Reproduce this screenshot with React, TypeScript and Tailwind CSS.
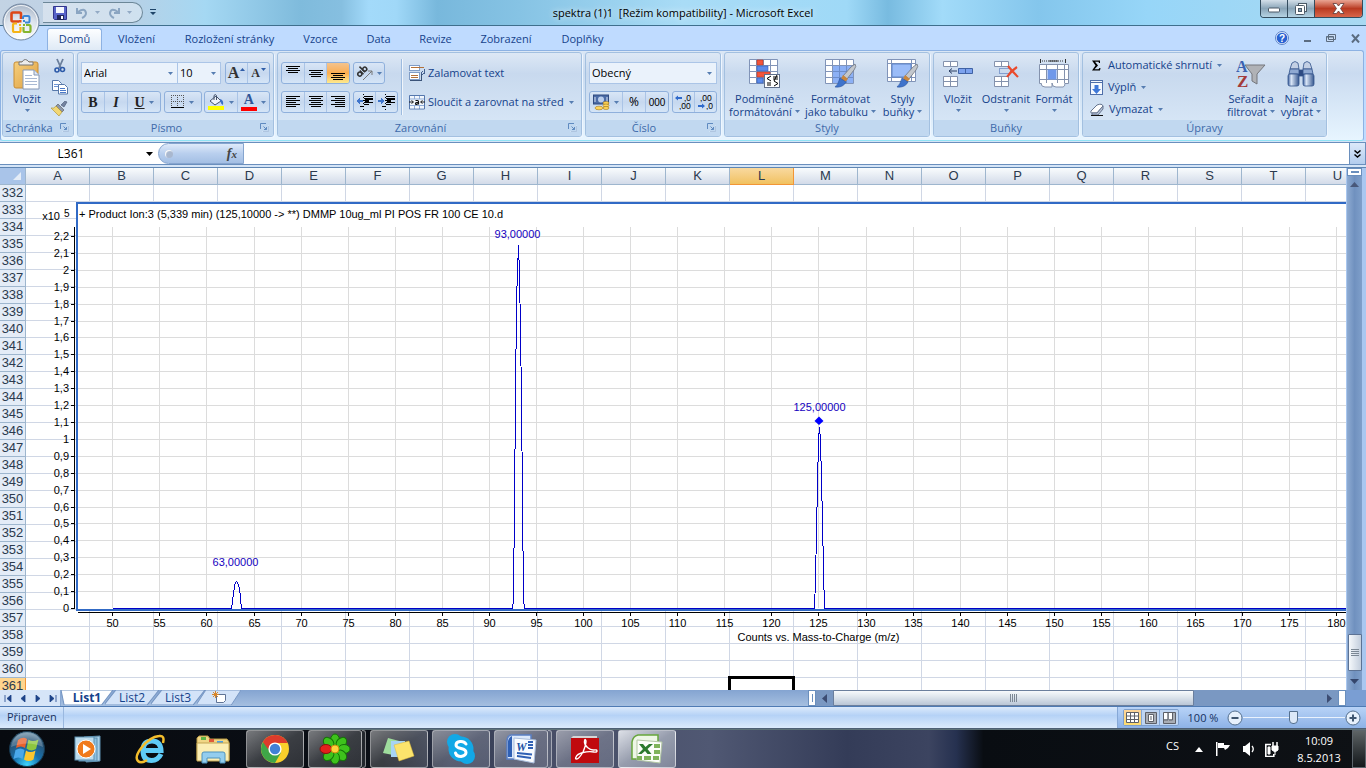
import React from "react";

type Kids = { children?: React.ReactNode; className?: string };

const Caret = ({ className = "text-[#567db1]" }: { className?: string }) => (
  <svg width="5" height="3" viewBox="0 0 5 3" className={"shrink-0 " + className} aria-hidden="true">
    <path d="M0 0h5L2.500 3z" fill="currentColor" />
  </svg>
);

const Launcher = ({ label }: { label: string }) => (
  <button aria-label={label} className="absolute right-1 top-[3px]">
    <svg width="9" height="9" viewBox="0 0 9 9" fill="none" stroke="#5f8ac0">
      <path d="M0.5 6V.5H6" />
      <path d="M8.500 3v5.500H3M3.500 3.500l3 3M6.500 4v2.500H4" />
      <path d="M2.500 8.500h6V2.500" stroke="#fff" opacity=".5" />
    </svg>
  </button>
);

function Group({ label, launcher, className = "", children }: Kids & { label: string; launcher?: boolean }) {
  return (
    <section
      aria-label={label}
      className={
        "flex h-[85px] shrink-0 flex-col overflow-hidden rounded-[3px] border border-[#a3c0e0] bg-linear-to-b from-[#dde8f5] via-[#c8d9ee] via-25% to-[#dae9f8] shadow-[1px_1px_0_#eef6ff] " +
        className
      }
    >
      <div className="min-h-0 flex-1">{children}</div>
      <div className={"relative h-4 bg-[#c1d8f0] text-center text-[11px] leading-4 text-[#3e6aaa] " + (launcher ? "pr-[18px]" : "")}>
        {label}
        {launcher && <Launcher label={"Možnosti: " + label} />}
      </div>
    </section>
  );
}

const Box = ({ children, className = "" }: Kids) => (
  <div
    className={
      "flex h-[22px] items-stretch divide-x divide-[#aac4e6] overflow-hidden rounded-[3px] border border-[#8fb0dc] bg-linear-to-b from-[#d9e6f6] via-[#c6d8ef] to-[#d5e5f7] " +
      className
    }
  >
    {children}
  </div>
);

const Tool = ({ label, children, className = "flex-1" }: Kids & { label: string }) => (
  <button aria-label={label} className={"flex items-center justify-center gap-1 " + className}>
    {children}
  </button>
);

function Combo({ label, value, className }: { label: string; value: string; className: string }) {
  return (
    <div className={"relative flex h-[22px] items-center border border-[#abc5e7] bg-[#eaf2fb] " + className}>
      <select aria-label={label} className="h-full w-full appearance-none bg-transparent pl-0.5 text-[11px] text-black outline-none" defaultValue={value}>
        <option>{value}</option>
      </select>
      <span className="pointer-events-none absolute right-1">
        <Caret />
      </span>
    </div>
  );
}

function Big({ icon, lines, caretBelow, className }: { icon: React.ReactNode; lines: string[]; caretBelow?: boolean; className: string }) {
  return (
    <button className={"flex shrink-0 flex-col items-center pt-[5px] text-[11px] leading-[13px] whitespace-nowrap text-[#15428b] " + className}>
      <span className="mb-0.5 flex h-8 items-center">{icon}</span>
      {lines.map((l, i) => (
        <span key={l} className="flex items-center gap-[3px]">
          {l}
          {!caretBelow && i === lines.length - 1 && <Caret />}
        </span>
      ))}
      {caretBelow && (
        <span className="pt-1">
          <Caret />
        </span>
      )}
    </button>
  );
}

/* ---------- ribbon icons ---------- */

const Bars = ({ rows }: { rows: number[][] }) => (
  <svg width="16" height="16" viewBox="0 0 16 16" stroke="#000" shapeRendering="crispEdges">
    {rows.map(([y, a, b]) => (
      <path key={y} d={`M${a} ${y + 0.5}H${b}`} />
    ))}
  </svg>
);

const top3 = [[1, 1, 15], [3, 3, 13], [5, 1, 15], [7, 3, 13]];
const mid3 = [[5, 1, 15], [7, 3, 13], [9, 1, 15], [11, 3, 13]];
const bot3 = [[8, 1, 15], [10, 3, 13], [12, 1, 15], [14, 3, 13]];
const left6 = [[2, 1, 15], [4, 1, 11], [6, 1, 15], [8, 1, 11], [10, 1, 15], [12, 1, 11]];
const center6 = [[2, 1, 15], [4, 3, 13], [6, 1, 15], [8, 3, 13], [10, 1, 15], [12, 3, 13]];
const right6 = [[2, 1, 15], [4, 5, 15], [6, 1, 15], [8, 5, 15], [10, 1, 15], [12, 5, 15]];

const Indent = ({ out }: { out?: boolean }) => (
  <svg width="18" height="16" viewBox="0 0 18 16" shapeRendering="crispEdges">
    <path d="M8 2.500h9M8 4.500h9M8 6.500h5M8 8.500h9M8 10.500h5M4 12.500h4" stroke="#000" />
    <path d="M9 5h8M9 7h4" stroke="#000" strokeWidth="2" />
    <path d="M7.500 0v16" stroke="#000" strokeDasharray="1 2" />
    <path d={out ? "M0 7l4-3v2h3v2H4v2z" : "M7 7L3 4v2H0v2h3v2z"} fill="#3f75cc" />
  </svg>
);

const PasteIcon = () => (
  <svg width="28" height="31" viewBox="0 0 28 31">
    <defs>
      <linearGradient id="board" x1="0" y1="0" x2="1" y2="1">
        <stop offset="0" stopColor="#f6cf7e" />
        <stop offset="1" stopColor="#dd9f3f" />
      </linearGradient>
    </defs>
    <rect x="1" y="3" width="24" height="26" rx="2" fill="url(#board)" stroke="#c88d35" />
    <path d="M6 6V3h3q3-5 7 0h4v3z" fill="#ececec" stroke="#777" />
    <path d="M10 11h11l5 5v14H10z" fill="#fff" stroke="#8698b5" />
    <path d="M21 11v5h5" fill="#dfe7f3" stroke="#8698b5" />
    <path d="M12 16.500h7M12 19.500h12M12 22.500h12M12 25.500h12" stroke="#a9b9d3" />
  </svg>
);
const CutIcon = () => (
  <svg width="14" height="16" viewBox="0 0 14 16" fill="none">
    <path d="M4 1l4 9M10 1L6 10" stroke="#6b7f9c" strokeWidth="1.800" />
    <circle cx="4" cy="12" r="2" stroke="#2d5aa8" strokeWidth="1.600" />
    <circle cx="9.500" cy="11.500" r="2" stroke="#2d5aa8" strokeWidth="1.600" />
  </svg>
);
const CopyIcon = () => (
  <svg width="16" height="15" viewBox="0 0 16 15" stroke="#5778aa" fill="#fff">
    <path d="M.5.5h6l3 3v7h-9z" />
    <path d="M2 4.500h4M2 6.500h5" stroke="#6f96d6" />
    <path d="M6.500 4.500h6l3 3v6.500h-9z" />
    <path d="M8 8.500h5M8 10.500h6M8 12.500h6" stroke="#4a79c9" />
  </svg>
);
const BrushIcon = () => (
  <svg width="17" height="15" viewBox="0 0 17 15">
    <path d="M10 4l4-4 2 1-3 5z" fill="#7483a0" stroke="#465572" strokeWidth=".6" />
    <path d="M7 3l6 6-2 2-6-6z" fill="#8b96a9" stroke="#555" strokeWidth=".6" />
    <path d="M5 5l6 6-3 4L0 7q3 1 5-2z" fill="#f2d774" stroke="#a88d2b" strokeWidth=".6" />
  </svg>
);
const BordersIcon = () => (
  <svg width="14" height="14" viewBox="0 0 14 14" shapeRendering="crispEdges">
    <path d="M0 .5h13M0 6.500h13M.5 0v12M6.500 0v12M12.500 0v12" stroke="#555" strokeDasharray="1 1" />
    <path d="M0 12.500h13" stroke="#000" strokeWidth="1" />
  </svg>
);
const FillIcon = () => (
  <svg width="17" height="16" viewBox="0 0 17 16">
    <path d="M2 7l6-5 5 5-6 4z" fill="#eef3fb" stroke="#44526b" />
    <path d="M6 6V1.500q1.500-2 2.500 0V6" fill="none" stroke="#44526b" />
    <path d="M12 5q4 1 3 6-2-1-3-4z" fill="#3a70c8" />
    <rect y="12" width="16" height="4" fill="#ff0" />
  </svg>
);
const OrientIcon = () => (
  <svg width="16" height="16" viewBox="0 0 16 16" fill="none">
    <g transform="rotate(-45 6 8)" stroke="#333" strokeWidth="1.500">
      <circle cx="3" cy="6.500" r="2" />
      <path d="M5.500 4v5.200M8 1v8" />
      <circle cx="10" cy="6.500" r="2" />
    </g>
    <path d="M6 15l9-9M15 10V6h-4" stroke="#777" />
  </svg>
);
const WrapIcon = () => (
  <svg width="16" height="16" viewBox="0 0 16 16" shapeRendering="crispEdges">
    <path d="M.5.5h10v5H.5zM.5 7.500h10v7H.5z" fill="#fff" stroke="#7f9cc6" />
    <path d="M2 2.500h13M2 10.500h7M2 12.500h7" stroke="#b3713a" />
    <path d="M1 15.500h11V8" stroke="#3b5379" fill="none" />
    <path d="M15.500 4v4h-2M14 6l-2 2 2 2" stroke="#45618f" fill="none" />
  </svg>
);
const MergeIcon = () => (
  <svg width="16" height="15" viewBox="0 0 16 15">
    <path d="M.5.5h15v13.500H.5z" fill="#8fabd6" stroke="#5577ad" />
    <path d="M1 1h4v2.500H1zM6 1h4v2.500H6zM11 1h4v2.500h-4zM1 4.500h14v5.500H1zM1 11h4v2.500H1zM6 11h4v2.500H6zM11 11h4v2.500h-4z" fill="#f2f7fd" />
    <path d="M0 7h4M2.500 5.500L4.500 7l-2 1.500M16 7h-4M13.500 5.500L11.500 7l2 1.500" stroke="#222" fill="none" />
    <path d="M6.500 5.500h2q1 0 1 1v3M9.500 7.500h-2q-1 0-1 1t1 .8l2-.8" stroke="#111" strokeWidth="1.200" fill="none" />
  </svg>
);
const MoneyIcon = () => (
  <svg width="17" height="17" viewBox="0 0 17 17">
    <rect x=".5" y="1" width="15" height="9" fill="#4b6ba6" stroke="#2f4a80" />
    <circle cx="8" cy="5.500" r="3" fill="#b9cdec" />
    <path d="M2 3v5M14 3v5" stroke="#dbe6f7" />
    <ellipse cx="13" cy="9" rx="3" ry="1.500" fill="#ffd65c" stroke="#a6791a" strokeWidth=".6" />
    <ellipse cx="13" cy="11.500" rx="3" ry="1.500" fill="#ffd65c" stroke="#a6791a" strokeWidth=".6" />
    <ellipse cx="13" cy="14" rx="3" ry="1.500" fill="#ffd65c" stroke="#a6791a" strokeWidth=".6" />
    <ellipse cx="6" cy="14" rx="4" ry="1.800" fill="#ffd65c" stroke="#a6791a" strokeWidth=".6" />
  </svg>
);
const DecimalIcon = ({ add }: { add?: boolean }) => (
  <svg width="18" height="16" viewBox="0 0 18 16" fontFamily="Liberation Sans, sans-serif" fontSize="8.500" fill="#000" stroke="none">
    <text x={add ? 9 : 3} y="7">{add ? ",0" : ",00"}</text>
    <text x={add ? 4 : 9} y="15">{add ? ",00" : ",0"}</text>
    <path d={add ? "M0 4l3-2.500V3h4v2H3v1.500z" : "M8 12L5 9.500V11H1v2h4v1.500z"} fill="#2f6acb" />
  </svg>
);
const Cells = ({ fill = "#fff" }: { fill?: string }) => (
  <path d="M.5.5h28v24H.5zM.5 6.500h28M.5 12.500h28M.5 18.500h28M7.500.5v24M14.500.5v24M21.500.5v24" fill={fill} stroke="#8194b8" />
);
const Paintbrush = () => (
  <>
    <path d="M30 5q2 2-1 6l-7 9-4-3 8-9z" fill="#c3c7cc" stroke="#646a73" strokeWidth=".7" />
    <path d="M18 16l5 4-3 3-4-3z" fill="#c9863c" />
    <path d="M15 19l6 4q-3 6-11 5 3-2 5-9z" fill="#3f73cb" stroke="#27519c" strokeWidth=".6" />
  </>
);
const CondIcon = () => (
  <svg width="31" height="30" viewBox="0 0 31 30">
    <Cells />
    <path d="M8 1h6v5H8zM8 13h13v5H8z" fill="#f2553b" stroke="#c53722" strokeWidth=".6" />
    <path d="M8 7h11v5H8zM8 19h6v5H8z" fill="#5c8bea" stroke="#2f5cba" strokeWidth=".6" />
    <rect x="15.500" y="15.500" width="15" height="13" fill="#fff" stroke="#5e6e8b" />
    <path d="M22 17l-4 2.500 4 2.500M24 18h5M24 20h5M28 16l-3 6M18 24h4M18 26h4M25 22l4 2.500-4 2.500" fill="none" stroke="#000" />
  </svg>
);
const TableStyleIcon = () => (
  <svg width="32" height="30" viewBox="0 0 32 30">
    <Cells />
    <path d="M8 7h20v17H8z" fill="#8cb0f5" />
    <path d="M8 12.500h20M8 18.500h20M14.500 7v17M21.500 7v17" stroke="#6c8dcb" />
    <Paintbrush />
  </svg>
);
const CellStyleIcon = () => (
  <svg width="32" height="30" viewBox="0 0 32 30">
    <path d="M.5.5h28v22H.5zM.5 4.500h28M.5 18.500h28M4.500.5v22M24.500.5v22" fill="#fff" stroke="#8194b8" />
    <rect x="5" y="5" width="19" height="13" fill="#9abcf8" stroke="#5f84c8" />
    <Paintbrush />
  </svg>
);
const InsertIcon = () => (
  <svg width="31" height="28" viewBox="0 0 31 28">
    <path d="M.5 1.500h14v5H.5zM7.500 1.500v5M.5 16.500h14v10H.5zM7.500 16.500v10M.5 21.500h14" fill="#fff" stroke="#8492ad" />
    <path d="M15.500 8.500h14v5h-14zM22.500 8.500v5" fill="#7ca2ee" stroke="#3f62a5" />
    <path d="M6 11h8M9 8.500L6 11l3 2.500" stroke="#2b3f63" fill="none" />
  </svg>
);
const DeleteIcon = () => (
  <svg width="25" height="28" viewBox="0 0 25 28">
    <path d="M.5 1.500h14v5H.5zM7.500 1.500v5M.5 16.500h14v10H.5zM7.500 16.500v10M.5 21.500h14" fill="#fff" stroke="#8492ad" />
    <path d="M5.500 8.500h11v5h-11z" fill="none" stroke="#3d64b0" strokeDasharray="1 1" />
    <path d="M14 6q4 5 10 11M23 7q-6 4-10 10" stroke="#ea4a2c" strokeWidth="2.200" fill="none" />
  </svg>
);
const FormatIcon = () => (
  <svg width="31" height="30" viewBox="0 0 31 30">
    <path d="M1.500 0v4M26.500 0v4" stroke="#333" />
    <path d="M3 2h22" stroke="#333" strokeDasharray="1 1" />
    <path d="M10 2h9" stroke="#333" />
    <path d="M.5 5.500h29v19H.5zM.5 10.500h29M.5 20.500h29M7.500 5.500v19M18.500 5.500v19M25.500 5.500v19" fill="#fff" stroke="#8492ad" />
    <rect x="8.500" y="10.500" width="9" height="10" fill="#6f98ea" />
    <path d="M2 24q0 4 4 4h7v-4M13 24q0 4 4 4h7q2 0 2-4" fill="#fff" stroke="#8492ad" />
  </svg>
);
const SortIcon = () => (
  <svg width="30" height="30" viewBox="0 0 30 30" fontFamily="Liberation Serif, serif" fontWeight="bold">
    <path d="M9 6h20l-8 9v10l-5-3v-7z" fill="#b0b2b6" stroke="#74777d" />
    <text x="0" y="13" fontSize="16" fill="#3a62b0">A</text>
    <text x="1" y="28" fontSize="17" fill="#a33b3b">Z</text>
  </svg>
);
const FindIcon = () => (
  <svg width="28" height="26" viewBox="0 0 28 26" stroke="#34548c" strokeWidth=".8">
    <defs>
      <linearGradient id="tube" x1="0" x2="1">
        <stop offset="0" stopColor="#3b5e9c" />
        <stop offset=".3" stopColor="#dbe7f8" />
        <stop offset="1" stopColor="#36578f" />
      </linearGradient>
    </defs>
    <path d="M5 2q3-3 6 0l1 6H3zM17 2q3-3 6 0l2 6h-9z" fill="#c3d0e4" />
    <path d="M11 9h6v6h-6z" fill="#2d4a82" />
    <path d="M3 8h9v5H2zM16 8h9l1 5H16z" fill="#8fa9d2" />
    <rect x="1" y="13" width="11" height="12" rx="2" fill="url(#tube)" />
    <rect x="16" y="13" width="11" height="12" rx="2" fill="url(#tube)" />
  </svg>
);
const DownFillIcon = () => (
  <svg width="13" height="15" viewBox="0 0 13 15">
    <rect x=".5" y=".5" width="12" height="14" fill="#f5f9ff" stroke="#4f6fa9" />
    <path d="M1 2.500h11" stroke="#4f6fa9" />
    <path d="M4.500 5h4v4H11l-4.500 5L2 9h2.500z" fill="#3f78d8" />
  </svg>
);
const EraserIcon = () => (
  <svg width="14" height="13" viewBox="0 0 14 13">
    <path d="M1 8l6-6q5-2 6 1L7 10H2q-2 0-1-2z" fill="#fff" stroke="#66758f" />
    <path d="M7 10L13 3v3l-5 6H2v-2z" fill="#b8c4d8" stroke="#66758f" />
    <path d="M1 12.500h12" stroke="#111" />
  </svg>
);

/* ---------- title bar and tabs ---------- */

function TitleBar() {
  return (
    <header className="relative flex h-[26px] shrink-0 items-center border-b border-[#3f6f8d] bg-[linear-gradient(90deg,#c3d3e4_0%,#b9d0e5_9%,#a5d8f3_15%,#7fbbdc_22%,#86bfe0_25%,#a3dafa_27%,#a0d8f8_29%,#78b8dc_32%,#86c3e4_38%,#a9dcf6_50%,#9fd9f7_62%,#78bbe0_65%,#a2dbf9_69%,#84c6ec_76%,#97d6f8_84%,#a9d9f2_100%)] pl-[43px]">
      <div className="flex h-[21px] items-center rounded-r-full border border-l-0 border-[#6c8798] bg-white/35 pr-2.5 pl-2.5">
        <button aria-label="Uložit" className="mr-[9px]">
          <svg width="14" height="14" viewBox="0 0 14 14">
            <path d="M.5.5h13v13H1.500l-1-1z" fill="#5763c9" stroke="#32358d" />
            <path d="M3 1h8v6H3z" fill="#f4f7ff" />
            <path d="M4 9h7v5H4z" fill="#20275e" />
            <path d="M8 10h2v3H8z" fill="#fff" />
          </svg>
        </button>
        <button aria-label="Zpět" className="flex items-center gap-[7px]">
          <svg width="12" height="12" viewBox="0 0 12 12" fill="none" stroke="#8ba5c2" strokeWidth="2">
            <path d="M1 1v5h5M2 5q7-5 8 1 0 3-4 5" />
          </svg>
          <Caret className="text-[#93aac5]" />
        </button>
        <button aria-label="Znovu" className="ml-2 flex items-center gap-[7px]">
          <svg width="12" height="12" viewBox="0 0 12 12" fill="none" stroke="#8ba5c2" strokeWidth="2">
            <path d="M11 1v5H6M10 5Q3 0 2 6q0 3 4 5" />
          </svg>
          <Caret className="text-[#93aac5]" />
        </button>
      </div>
      <button aria-label="Přizpůsobit panel nástrojů Rychlý přístup" className="ml-[7px]">
        <svg width="6" height="7" viewBox="0 0 6 7" fill="#1f4569">
          <path d="M0 0h6v1H0zM0 3h6L3 6z" />
        </svg>
      </button>
      <h1 className="absolute inset-x-0 top-1 text-center text-[11px] leading-[18px] whitespace-pre text-black [text-shadow:0_0_6px_#fff]">
        {"spektra (1)1  [Režim kompatibility] - Microsoft Excel"}
      </h1>
      <div className="relative mr-[3px] ml-auto flex h-[18px] self-start overflow-hidden rounded-b-[4px] border border-t-0 border-[#334c5e]">
        <button aria-label="Minimalizovat" className="flex w-[27px] items-end justify-center border-r border-[#334c5e] bg-linear-to-b from-[#d3dfe9] via-[#8aa5b8] via-50% to-[#b5d3e4] pb-1">
          <svg width="13" height="6" viewBox="0 0 13 6"><rect x=".5" y="1" width="11" height="4" rx="1" fill="#fff" stroke="#4c5b68" /></svg>
        </button>
        <button aria-label="Obnovit" className="flex w-[27px] items-center justify-center border-r border-[#334c5e] bg-linear-to-b from-[#d3dfe9] via-[#8aa5b8] via-50% to-[#b5d3e4]">
          <svg width="13" height="12" viewBox="0 0 13 12" fill="#fff" stroke="#4c5b68">
            <rect x="3.500" y=".5" width="8" height="8" />
            <rect x=".5" y="2.500" width="9" height="9" rx="1" />
            <rect x="3.500" y="5.500" width="3" height="3" fill="#8aa5b8" />
          </svg>
        </button>
        <button aria-label="Zavřít" className="flex w-[47px] items-center justify-center bg-linear-to-b from-[#e9a493] via-[#b93a21] via-50% to-[#d8654a]">
          <svg width="13" height="11" viewBox="0 0 13 11"><path d="M1 .5h3.500l2 2.500 2-2.500H12L8.500 5.500 12 10.500H8.500l-2-2.500-2 2.500H1l3.500-5z" fill="#fff" stroke="#5d3a3a" strokeWidth=".8" /></svg>
        </button>
      </div>
      <button aria-label="Tlačítko Office" className="absolute top-[3px] left-[2px] z-10">
        <svg width="38" height="38" viewBox="0 0 38 38">
          <defs>
            <radialGradient id="orb" cx=".5" cy=".9" r=".9">
              <stop offset="0" stopColor="#fff" />
              <stop offset=".6" stopColor="#dde4ed" />
              <stop offset="1" stopColor="#a4b2c4" />
            </radialGradient>
          </defs>
          <circle cx="19" cy="19" r="18" fill="url(#orb)" stroke="#71859f" />
          <circle cx="19" cy="19" r="16.500" fill="none" stroke="#fff" opacity=".8" />
          <g fill="none" strokeWidth="2.600">
            <path d="M17 18.500h-6q-1.500 0-1.500-1.500v-6q0-1.500 1.500-1.500h6.500q1.500 0 1.500 1.500v5" stroke="#dd4717" />
            <path d="M21 16v-1.500q0-1.500 1.500-1.500h3.500q1.500 0 1.500 1.500V18q0 1.500-1.500 1.500h-3" stroke="#3a86d8" strokeWidth="2" />
            <path d="M15 20.500h-2.500q-1.500 0-1.500 1.500v5.500q0 1.500 1.500 1.500h4.500q1.500 0 1.500-1.500V24" stroke="#f5b417" strokeWidth="2.200" />
            <path d="M21.500 24v3.500q0 1.500 1.500 1.500h4q1.500 0 1.500-1.500v-4q0-1.500-1.500-1.500h-3" stroke="#86b52e" strokeWidth="2.200" />
          </g>
          <path d="M17 17h2.500v2.500H17z" fill="#e2511c" /><path d="M21 17h2v2h-2z" fill="#3a86d8" />
          <path d="M17 21h2v2h-2z" fill="#f5b417" /><path d="M21 21h2v2h-2z" fill="#86b52e" />
        </svg>
      </button>
    </header>
  );
}

const tabs: [string, string][] = [
  ["Vložení", "w-[67px]"],
  ["Rozložení stránky", "w-[119px]"],
  ["Vzorce", "w-[63px]"],
  ["Data", "w-[53px]"],
  ["Revize", "w-[61px]"],
  ["Zobrazení", "w-20"],
  ["Doplňky", "w-[73px]"],
];

function TabRow() {
  return (
    <nav className="flex h-6 shrink-0 bg-[#bfdbff] pl-[47px] text-[11px] whitespace-nowrap text-[#15428b]">
      <button className="mt-0.5 mr-px w-[55px] rounded-t-[3px] border border-b-0 border-[#8db2e3] bg-linear-to-b from-[#fdfeff] to-[#dfeaf6]">Domů</button>
      {tabs.map(([t, w]) => (
        <button key={t} className={"pt-0.5 text-center " + w}>{t}</button>
      ))}
      <div className="ml-auto flex items-center gap-[15px] pr-[6px]">
        <button aria-label="Nápověda">
          <svg width="14" height="14" viewBox="0 0 14 14">
            <circle cx="7" cy="7" r="6.500" fill="#eaf2fd" stroke="#5c83c9" />
            <circle cx="7" cy="7" r="5.300" fill="#2a62d2" />
            <text x="7" y="10.500" fontSize="10" fontWeight="bold" fill="#fff" textAnchor="middle" fontFamily="Liberation Sans, sans-serif">?</text>
          </svg>
        </button>
        <button aria-label="Minimalizovat sešit" className="pt-1.5"><svg width="7" height="2"><path d="M0 0h7v2H0z" fill="#5b6c80" /></svg></button>
        <button aria-label="Obnovit sešit">
          <svg width="10" height="8" viewBox="0 0 10 8" fill="#c9dcf5" stroke="#5b6c80"><path d="M2.500.5h7v5h-7zM.5 2.500h7v5h-7z" /><path d="M.5 3h7" /></svg>
        </button>
        <button aria-label="Zavřít sešit">
          <svg width="9" height="9" viewBox="0 0 9 9"><path d="M1 .5l7 8M8 .5l-7 8" stroke="#5b6c80" strokeWidth="2" /></svg>
        </button>
      </div>
    </nav>
  );
}

/* ---------- ribbon ---------- */

function Ribbon() {
  return (
    <div className="shrink-0 bg-[#bfdbff] pr-0.5">
      <div className="flex h-[91px] gap-[3px] overflow-hidden rounded-[3px] border border-[#8db2e3] border-b-[#8fe3f5] bg-linear-to-b from-[#dbe7f5] via-[#cadbf0] via-25% to-[#e7f5ff] pt-px pl-px">
        <Group label="Schránka" launcher className="w-[72px]">
          <div className="flex">
            <Big icon={<PasteIcon />} lines={["Vložit"]} caretBelow className="w-[48px]" />
            <div className="flex flex-col items-center gap-1.5 pt-[5px]">
              <button aria-label="Vyjmout"><CutIcon /></button>
              <button aria-label="Kopírovat"><CopyIcon /></button>
              <button aria-label="Kopírovat formát"><BrushIcon /></button>
            </div>
          </div>
        </Group>
        <Group label="Písmo" launcher className="w-[197px]">
          <div className="flex flex-col gap-[7px] px-[3px] pt-[9px]">
            <div className="flex">
              <Combo label="Písmo" value="Arial" className="w-[97px]" />
              <Combo label="Velikost písma" value="10" className="w-[43px] border-l-0" />
              <Box className="ml-1 w-[45px] font-[Liberation_Serif,serif] font-bold text-[#333]">
                <Tool label="Zvětšit písmo" className="min-w-0 flex-1 gap-px">
                  <span className="text-[16px] leading-5">A</span>
                  <svg width="5" height="3" className="mb-2 shrink-0"><path d="M0 3h5L2.500 0z" fill="#2f5da8" /></svg>
                </Tool>
                <Tool label="Zmenšit písmo" className="min-w-0 flex-1 gap-px">
                  <span className="text-[12px] leading-5">A</span>
                  <svg width="5" height="3" className="mb-2 shrink-0"><path d="M0 0h5L2.500 3z" fill="#2f5da8" /></svg>
                </Tool>
              </Box>
            </div>
            <div className="flex justify-between font-[Liberation_Serif,serif] text-[14px] text-[#222]">
              <Box className="w-20">
                <Tool label="Tučné"><b>B</b></Tool>
                <Tool label="Kurzíva"><b><i>I</i></b></Tool>
                <Tool label="Podtržené" className="w-8"><b className="underline">U</b><Caret /></Tool>
              </Box>
              <Box className="w-[38px]">
                <Tool label="Ohraničení"><BordersIcon /><Caret /></Tool>
              </Box>
              <Box className="w-[66px]">
                <Tool label="Barva výplně"><FillIcon /><Caret /></Tool>
                <Tool label="Barva písma">
                  <span className="flex w-4 flex-col items-center">
                    <span className="text-[14px] leading-[14px] font-bold text-[#2f5597]">A</span>
                    <span className="h-1 w-4 bg-[#f00]" />
                  </span>
                  <Caret />
                </Tool>
              </Box>
            </div>
          </div>
        </Group>
        <Group label="Zarovnání" launcher className="w-[305px]">
          <div className="flex">
            <div className="flex flex-col gap-[7px] pt-[9px] pl-[3px]">
              <div className="flex gap-[3px]">
                <Box className="w-[69px]">
                  <Tool label="Zarovnat nahoru"><Bars rows={top3} /></Tool>
                  <Tool label="Zarovnat na střed svisle"><Bars rows={mid3} /></Tool>
                  <Tool label="Zarovnat dolů" className="flex-1 bg-linear-to-b from-[#f3c38d] via-[#fbad4e] to-[#fdea8e]"><Bars rows={bot3} /></Tool>
                </Box>
                <Box className="w-8"><Tool label="Orientace" className="flex-1 gap-0.5"><OrientIcon /><Caret /></Tool></Box>
              </div>
              <div className="flex gap-[3px]">
                <Box className="w-[69px]">
                  <Tool label="Zarovnat vlevo"><Bars rows={left6} /></Tool>
                  <Tool label="Zarovnat na střed"><Bars rows={center6} /></Tool>
                  <Tool label="Zarovnat vpravo"><Bars rows={right6} /></Tool>
                </Box>
                <Box className="w-[45px]">
                  <Tool label="Zmenšit odsazení"><Indent out /></Tool>
                  <Tool label="Zvětšit odsazení"><Indent /></Tool>
                </Box>
              </div>
            </div>
            <div className="mt-1.5 ml-[3px] h-14 w-0.5 border-l border-[#9dbbdf] bg-white/70" />
            <div className="flex flex-col gap-[7px] pt-[9px] pl-1.5 text-[11px] whitespace-nowrap text-[#15428b]">
              <button className="flex h-[22px] items-center gap-[3px]"><WrapIcon />Zalamovat text</button>
              <button className="flex h-[22px] items-center gap-[3px]"><MergeIcon />Sloučit a zarovnat na střed<span className="pl-0.5"><Caret /></span></button>
            </div>
          </div>
        </Group>
        <Group label="Číslo" launcher className="w-[136px]">
          <div className="flex flex-col gap-[7px] px-[3px] pt-[9px]">
            <Combo label="Formát čísla" value="Obecný" className="w-full" />
            <div className="flex justify-between text-[12px] text-black">
              <Box className="w-20">
                <Tool label="Účetní formát čísla" className="w-[33px]"><MoneyIcon /><Caret /></Tool>
                <Tool label="Styl procent">%</Tool>
                <Tool label="Styl čárky"><span className="font-[Liberation_Sans,sans-serif] text-[10px]">000</span></Tool>
              </Box>
              <Box className="w-[45px]">
                <Tool label="Přidat desetinné místo"><DecimalIcon add /></Tool>
                <Tool label="Odebrat desetinné místo"><DecimalIcon /></Tool>
              </Box>
            </div>
          </div>
        </Group>
        <Group label="Styly" className="w-[206px]">
          <div className="flex pl-px">
            <Big icon={<CondIcon />} lines={["Podmíněné", "formátování"]} className="w-[77px]" />
            <Big icon={<TableStyleIcon />} lines={["Formátovat", "jako tabulku"]} className="w-[75px]" />
            <Big icon={<CellStyleIcon />} lines={["Styly", "buňky"]} className="w-[49px]" />
          </div>
        </Group>
        <Group label="Buňky" className="w-[146px]">
          <div className="flex">
            <Big icon={<InsertIcon />} lines={["Vložit"]} caretBelow className="w-12" />
            <Big icon={<DeleteIcon />} lines={["Odstranit"]} caretBelow className="w-12" />
            <Big icon={<FormatIcon />} lines={["Formát"]} caretBelow className="w-12" />
          </div>
        </Group>
        <Group label="Úpravy" className="w-[245px]">
          <div className="flex">
            <div className="flex w-[142px] flex-col pt-px pl-[7px] text-[11px] whitespace-nowrap text-[#15428b]">
              <button className="flex h-[22px] items-center gap-[5px]">
                <svg width="13" height="11" viewBox="0 0 13 11"><path d="M2 .5h8V3H9L8.500 1.800H5L8 5.500 4.500 9.200h4L9.500 8h1l-.5 2.500H2L5.500 5.500z" fill="#000" /></svg>
                Automatické shrnutí
                <Caret />
              </button>
              <button className="flex h-[22px] items-center gap-[5px]"><DownFillIcon />Výplň<Caret /></button>
              <button className="flex h-[22px] items-center gap-[5px]"><EraserIcon />Vymazat<Caret /></button>
            </div>
            <Big icon={<SortIcon />} lines={["Seřadit a", "filtrovat"]} className="w-[52px]" />
            <Big icon={<FindIcon />} lines={["Najít a", "vybrat"]} className="w-[48px]" />
          </div>
        </Group>
      </div>
    </div>
  );
}

function FormulaBar() {
  return (
    <div className="flex h-[27px] shrink-0 border-b border-[#5f86b3] bg-[#d5e5f7] pt-px">
      <div className="flex h-[23px] flex-1 border-y border-[#6a8fbd] bg-white">
        <div className="relative flex w-[158px] items-center">
          <input aria-label="Pole názvů" defaultValue="L361" className="w-full bg-transparent pr-4 text-center text-[12px] text-black outline-none" />
          <svg width="7" height="4" className="absolute right-[5px]" aria-hidden="true"><path d="M0 0h7L3.500 4z" fill="#000" /></svg>
        </div>
        <div className="flex w-[86px] items-center justify-between rounded-l-full border border-[#86a5cf] bg-linear-to-b from-[#dfeafa] via-[#b9cfee] to-[#a3bfe4] pr-1.5 pl-1.5">
          <span className="h-2 w-2 rounded-full bg-[#a9b8cf] shadow-[inset_1px_1px_1px_#fff]" />
          <button aria-label="Vložit funkci" className="font-[Liberation_Serif,serif] text-[14px] leading-5 font-bold text-[#444] italic">
            f<span className="text-[11px]">x</span>
          </button>
        </div>
        <input aria-label="Řádek vzorců" className="h-full min-w-0 flex-1 bg-white outline-none" />
        <button aria-label="Rozbalit řádek vzorců" className="flex w-[17px] items-center justify-center border-x border-[#6a8fbd] bg-linear-to-b from-[#dce9f9] to-[#b3cdee]">
          <svg width="7" height="8" viewBox="0 0 7 8" fill="none" stroke="#000" strokeWidth="1.500"><path d="M.5.5l3 2.500 3-2.500M.5 4.500l3 2.500 3-2.500" /></svg>
        </button>
      </div>
    </div>
  );
}

/* ---------- sheet ---------- */

const columns = "ABCDEFGHIJKLMNOPQRSTU".split("");
const rows = Array.from({ length: 30 }, (_, i) => 332 + i);

const xAt = (mz: number) => Math.round(112.3 + ((mz - 50) / 5) * 47.08) + 0.5;
const yAt = (v: number) => Math.round(608 - v * 169.1) + 0.5;
const xTicks = Array.from({ length: 27 }, (_, i) => 50 + i * 5);
const yTicks = Array.from({ length: 23 }, (_, i) => i / 10);

function Spectrum() {
  return (
    <svg
      className="absolute top-[17px] left-[26px] font-[Liberation_Sans,Arial,sans-serif]"
      width="1320"
      height="505"
      viewBox="26 185 1320 505"
      fontSize="11"
      role="img"
      aria-label="Counts vs. Mass-to-Charge"
    >
      <path d="M77 203h1280v407H77z" fill="#fff" stroke="#316ac5" strokeWidth="2" />
      <g stroke="#dcdcdc" shapeRendering="crispEdges">
        {xTicks.map((t) => <path key={t} d={`M${xAt(t)} 227V608`} />)}
        {yTicks.slice(1).map((t) => <path key={t} d={`M78 ${yAt(t)}H1346`} />)}
      </g>
      <g stroke="#000" shapeRendering="crispEdges">
        <path d="M74.500 227V609M78 612.500H1346" />
        {xTicks.map((t) => <path key={t} d={`M${xAt(t)} 612V616`} />)}
        {yTicks.map((t) => <path key={t} d={`M71 ${yAt(t)}H74`} />)}
      </g>
      <g textAnchor="end">
        {yTicks.map((t) => <text key={t} x="69" y={yAt(t) + 3.5}>{String(t).replace(".", ",")}</text>)}
        <text x="60" y="220">x10</text>
        <text x="69.500" y="217" fontSize="10">5</text>
      </g>
      <g textAnchor="middle">
        {xTicks.map((t) => <text key={t} x={xAt(t)} y="627">{t}</text>)}
        <text x="818.500" y="641">Counts vs. Mass-to-Charge (m/z)</text>
      </g>
      <text x="79" y="218">{"+ Product Ion:3 (5,339 min) (125,10000 -> **) DMMP 10ug_ml PI POS FR 100 CE 10.d"}</text>
      <path
        d="M113 608.500H231.500L234.500 586L235.500 582.500L236.500 581.500L237.500 582.500L239.500 588L241.500 608.500H512.500L513.500 600 515.500 400 516.500 300 518.500 245 519.500 275 520.500 330 521.500 400 523.500 600 524.500 608.500H814.500L815.500 580 816.500 530 818.500 440 819.500 427 820.500 440 822.500 520 823.500 570 824.500 608.500H1346"
        fill="none"
        stroke="#0000c8"
        shapeRendering="crispEdges"
      />
      <path d="M819 416.500l4.500 4.500-4.500 4-4.500-4z" fill="#0000ff" />
      <g textAnchor="middle" fill="#1500c0">
        <text x="235.500" y="566">63,00000</text>
        <text x="517.500" y="238">93,00000</text>
        <text x="819.500" y="411">125,00000</text>
      </g>
    </svg>
  );
}

function Sheet() {
  return (
    <main className="flex min-h-0 flex-1">
      <div className="relative min-w-0 flex-1 overflow-hidden bg-white">
        <table className="w-[1370px] table-fixed border-separate border-spacing-0 font-[Liberation_Sans,Arial,sans-serif] text-[13px] leading-4 font-normal text-[#2b3a4e]">
          <thead>
            <tr className="h-[17px]">
              <th className="w-[26px] border-r border-b border-[#9eb6ce] bg-[#a9c4e9] p-0">
                <svg width="8" height="8" className="mr-1 ml-auto" aria-hidden="true"><path d="M8 0v8H0z" fill="#e4ecf7" /></svg>
              </th>
              {columns.map((c) => (
                <th
                  key={c}
                  className={
                    "w-16 border-r border-b p-0 font-normal " +
                    (c === "L" ? "border-[#f29536] bg-linear-to-b from-[#f9d99f] to-[#f1c15f]" : "border-[#9eb6ce] bg-linear-to-b from-[#f9fcfd] to-[#d3dbe9]")
                  }
                >
                  {c}
                </th>
              ))}
            </tr>
          </thead>
          <tbody>
            {rows.map((r) => (
              <tr key={r} className="h-[17px]">
                <th className={"border-r border-b p-0 text-center font-normal " + (r === 361 ? "border-[#f29536] bg-[#ffd58d]" : "border-[#9eb6ce] bg-[#e4ecf7]")}>{r}</th>
                {columns.map((c) => (
                  <td key={c} className="relative border-r border-b border-[#d0d7e5] p-0">
                    {c === "L" && r === 361 && <span className="absolute -top-[2px] -right-[2px] -bottom-[2px] -left-[2px] border-[3px] border-black" />}
                  </td>
                ))}
              </tr>
            ))}
          </tbody>
        </table>
        <Spectrum />
      </div>
      <div className="flex w-5 flex-col items-center border-r-4 border-l border-[#a9c7f0] bg-linear-to-r from-[#8eabd2] via-[#7091bf] to-[#7f9fca]">
        <div className="flex h-2 w-full items-center justify-center border border-[#6a8fbd] bg-white"><span className="h-0.5 w-2 bg-[#6a8fbd]" /></div>
        <button aria-label="Posunout nahoru" className="mt-1.5"><svg width="9" height="5"><path d="M0 5h9L4.500 0z" fill="#48587a" /></svg></button>
        <div className="mt-auto flex h-[37px] w-[14px] flex-col items-center justify-center gap-px rounded-[1px] border border-[#5c7294] bg-linear-to-r from-[#f5f8fb] to-[#c3cedd]">
          {[0, 1, 2, 3].map((i) => <span key={i} className="h-px w-2 bg-[#7b8794]" />)}
        </div>
        <button aria-label="Posunout dolů" className="mt-2 mb-1.5"><svg width="9" height="5"><path d="M0 0h9L4.500 5z" fill="#34456b" /></svg></button>
      </div>
    </main>
  );
}

const navPaths: [string, string][] = [
  ["První list", "M1 0v7M7 0v7L3 3.500z"],
  ["Předchozí list", "M6 0v7L2 3.500z"],
  ["Další list", "M2 0v7l4-3.500z"],
  ["Poslední list", "M1 0v7l4-3.500zM7 0v7"],
];

function SheetTab({ label, active, children, className }: Kids & { label: string; active?: boolean }) {
  return (
    <button aria-label={label} className={"relative flex h-[15px] items-center justify-center " + className}>
      <svg className="absolute inset-0 h-full w-full" viewBox="0 0 50 15" preserveAspectRatio="none" aria-hidden="true">
        <path d={active ? "M0 0H50L39 15H3z" : "M10 0H50L39 15H-1z"} fill={active ? "#fff" : "#d3e3f8"} stroke="#7595c2" />
      </svg>
      <span className="relative">{children}</span>
    </button>
  );
}

function SheetBar() {
  return (
    <div className="flex h-[17px] shrink-0 border-b border-[#4f7bb4] bg-linear-to-b from-[#84a4d1] to-[#a5bfe0]">
      <div className="flex w-[61px] items-center justify-around border-r border-[#8aa9d3] bg-[#d6e5f8]">
        {navPaths.map(([l, d]) => (
          <button key={l} aria-label={l}><svg width="8" height="7" viewBox="0 0 8 7"><path d={d} fill="#1d4388" stroke="#1d4388" strokeWidth=".8" /></svg></button>
        ))}
      </div>
      <div className="flex text-[12px] leading-[15px] text-[#15428b]">
        <SheetTab label="List1" active className="w-[52px]"><b>List1</b></SheetTab>
        <SheetTab label="List2" className="-ml-2 w-[54px]">List2</SheetTab>
        <SheetTab label="List3" className="-ml-2 w-[54px]">List3</SheetTab>
        <SheetTab label="Vložit list" className="-ml-2 w-11">
          <svg width="15" height="13" viewBox="0 0 15 13">
            <path d="M4.500 3.500h9v6l-2 2h-7z" fill="#fff" stroke="#5f7395" />
            <path d="M3.500 0v7M0 3.500h7M1 1l5 5M6 1L1 6" stroke="#d8862a" />
          </svg>
        </SheetTab>
      </div>
      <div className="ml-auto flex w-[538px] bg-[#7a98c2]">
        <span className="w-2 border border-[#6a8fbd] bg-white p-[3px]"><span className="block h-2 w-px bg-[#6a8fbd]" /></span>
        <button aria-label="Posunout doleva" className="flex w-[17px] items-center justify-center"><svg width="5" height="9"><path d="M5 0v9L0 4.500z" fill="#3c4c72" /></svg></button>
        <div className="flex w-[361px] items-center justify-center gap-px rounded-[1px] border border-[#6b7f9d] bg-linear-to-b from-[#f7fafc] via-[#d9e1ea] to-[#bac6d6]">
          {[0, 1, 2, 3].map((i) => <span key={i} className="h-2 w-px bg-[#7b8794]" />)}
        </div>
        <button aria-label="Posunout doprava" className="ml-auto flex w-[13px] items-center justify-center"><svg width="5" height="9"><path d="M0 0v9l5-4.500z" fill="#3c4c72" /></svg></button>
        <span className="ml-0.5 w-2 border border-[#6a8fbd] bg-white p-[3px]" />
      </div>
      <div className="w-5 bg-[#7a9ed3]" />
    </div>
  );
}

function StatusBar() {
  return (
    <footer className="flex h-[22px] shrink-0 border-b border-[#4d5f74] bg-linear-to-b from-[#dceafb] via-[#b5d2f6] via-40% to-[#dbeafb] text-[11px] leading-[20px] text-[#15315f]">
      <span className="w-16 border-r border-[#9ab8df] pl-[7px]">Připraven</span>
      <div className="ml-auto flex items-center border-l border-[#86a8d6] bg-linear-to-b from-[#b8d3f7] to-[#8db2e6] pr-[5px] pl-[5px]">
        <div className="flex h-[17px] divide-x divide-[#86a8d6] rounded-[2px] border border-[#7e9fcc] bg-[#bfd5f2]">
          <button aria-label="Normálně" className="flex w-[18px] items-center justify-center bg-linear-to-b from-[#fbd39a] to-[#fddc6e]">
            <svg width="13" height="11" viewBox="0 0 13 11"><path d="M.5.5h12v10H.5zM.5 4h12M.5 7.500h12M4.500.5v10M8.500.5v10" fill="#fff" stroke="#5d6068" /></svg>
          </button>
          <button aria-label="Rozložení stránky" className="flex w-[18px] items-center justify-center">
            <svg width="12" height="12" viewBox="0 0 12 12"><path d="M.5.5h11v11H.5z" fill="#a8adb5" stroke="#5d6068" /><path d="M3.500 2.500h5v7h-5z" fill="#fff" stroke="#5d6068" /><path d="M5 5h2M5 7h2" stroke="#5d6068" /></svg>
          </button>
          <button aria-label="Zobrazit konce stránek" className="flex w-[18px] items-center justify-center">
            <svg width="13" height="12" viewBox="0 0 13 12"><path d="M.5.5h12v11H.5z" fill="#a8adb5" stroke="#5d6068" /><path d="M1 1h3.500v6H1zM6 1h3v6H6z" fill="#fff" /><path d="M5 1v7H1M9.500 1v7H6" fill="none" stroke="#5d6068" /></svg>
          </button>
        </div>
        <button className="w-12 text-center">100 %</button>
        <button aria-label="Oddálit"><svg width="16" height="16" viewBox="0 0 16 16"><circle cx="8" cy="8" r="7" fill="#e6f0fc" stroke="#54708f" /><path d="M4.500 8h7" stroke="#3f5670" strokeWidth="2" /></svg></button>
        <input
          type="range"
          aria-label="Lupa"
          min="0"
          max="100"
          defaultValue="49"
          className="h-4 w-[102px] appearance-none bg-[linear-gradient(#e9f2fd,#e9f2fd)] bg-[length:100%_1px] bg-center bg-no-repeat [&::-webkit-slider-thumb]:h-[13px] [&::-webkit-slider-thumb]:w-[9px] [&::-webkit-slider-thumb]:appearance-none [&::-webkit-slider-thumb]:rounded-b-[4px] [&::-webkit-slider-thumb]:border [&::-webkit-slider-thumb]:border-[#54708f] [&::-webkit-slider-thumb]:bg-[#dbe8f8]"
        />
        <button aria-label="Přiblížit"><svg width="16" height="16" viewBox="0 0 16 16"><circle cx="8" cy="8" r="7" fill="#e6f0fc" stroke="#54708f" /><path d="M4.500 8h7M8 4.500v7" stroke="#3f5670" strokeWidth="2" /></svg></button>
      </div>
    </footer>
  );
}

/* ---------- taskbar ---------- */

const petals = [0, 45, 90, 135, 180, 225, 315, 270];

const StartOrb = () => (
  <svg width="38" height="38" viewBox="0 0 38 38">
    <defs>
      <radialGradient id="start" cx=".5" cy=".95" r=".95">
        <stop offset="0" stopColor="#3fd6ff" />
        <stop offset=".4" stopColor="#1770ad" />
        <stop offset=".75" stopColor="#285477" />
        <stop offset="1" stopColor="#7f9fb4" />
      </radialGradient>
    </defs>
    <circle cx="19" cy="19" r="17.500" fill="url(#start)" stroke="#16384f" />
    <path d="M10 10q5-4 9-1l-2 9q-4-3-9 0z" fill="#e8622c" />
    <path d="M20.500 9.500q4 3 10 0l-2.500 9.500q-5 3-9.500-.5z" fill="#8dc63f" />
    <path d="M7.500 20q5-3 9 0l-2 9q-4-3-9 0z" fill="#4aa8ea" />
    <path d="M18 20.500q4 3 9.500 0l-2 9q-5 3-9.500 0z" fill="#fbc62e" />
    <path d="M3 17Q6 3 19 3t16 14Q20 10 3 17z" fill="#fff" opacity=".22" />
  </svg>
);
const MediaIcon = () => (
  <svg width="28" height="28" viewBox="0 0 28 28">
    <path d="M10 2l16-1v25l-14 1z" fill="#a9d0e8" stroke="#5d8fb0" />
    <rect x="5" y="3" width="18" height="23" fill="#8cc0e0" stroke="#5d8fb0" />
    <rect x="1" y="2" width="19" height="23" fill="#bcdcee" stroke="#5d8fb0" />
    <circle cx="12" cy="14" r="9" fill="#f07a1c" stroke="#fff" /><path d="M9 9l8 5-8 5z" fill="#fff" />
  </svg>
);
const IEIcon = () => (
  <svg width="32" height="32" viewBox="0 0 32 32" fill="none">
    <path d="M26 21q-3 6.500-9.500 6.500Q8 27.500 8 17.500q0-9.500 9-9.500 8.500 0 9 9.500H10" stroke="#5fcbf7" strokeWidth="5" />
    <path d="M28 10q2-8-4-7Q15 4 7 14T3 28q3 3 9-1" stroke="#f3bd2c" strokeWidth="2.500" />
  </svg>
);
const FolderIcon = () => (
  <svg width="34" height="30" viewBox="0 0 34 30">
    <path d="M1 4l2-2h9l2 3h17l2 3v18H1z" fill="#f0d685" stroke="#b99a45" />
    <path d="M5 3h5v3H5z" fill="#5fb548" /><path d="M13 5h5v3h-5z" fill="#e05b3a" /><path d="M21 7h6v3h-6z" fill="#4d9fe0" />
    <path d="M1 9h32v18H1z" fill="#fbeeb4" stroke="#c3a552" />
    <path d="M6 29V20q0-2 2-2h19q2 0 2 2v9h-5v-5H11v5z" fill="#93cdee" stroke="#4f93bd" />
  </svg>
);
const ChromeIcon = () => (
  <svg width="30" height="30" viewBox="0 0 30 30">
    <circle cx="15" cy="15" r="14" fill="#f9cf2b" />
    <path d="M15 15L2.900 8A14 14 0 0 0 15 29l6-10.500z" fill="#3fa648" />
    <path d="M2.900 8A14 14 0 0 1 27.600 9H15v6H8z" fill="#dd3b2b" />
    <circle cx="15" cy="15" r="6.600" fill="#fff" /><circle cx="15" cy="15" r="5.200" fill="#4181d6" />
  </svg>
);
const IcqIcon = () => (
  <svg width="32" height="32" viewBox="0 0 32 32">
    {petals.map((a) => (
      <ellipse key={a} cx="16" cy="7" rx="4.500" ry="6" transform={`rotate(${a} 16 16)`} fill={a === 270 ? "#e2201c" : "#3ec21c"} stroke={a === 270 ? "#8b0f0f" : "#157208"} />
    ))}
    <circle cx="16" cy="16" r="4" fill="#ffd23a" stroke="#c78c10" />
  </svg>
);
const NotesIcon = () => (
  <svg width="34" height="28" viewBox="0 0 34 28">
    <path d="M6 3l15 4-5 14-15-3z" fill="#9fdd9d" /><path d="M9 6h14v16H9z" fill="#a7d4f5" />
    <path d="M12 10l15-4 5 15-15 5z" fill="#fce46c" stroke="#dcb93a" strokeWidth=".5" />
  </svg>
);
const SkypeIcon = () => (
  <svg width="32" height="32" viewBox="0 0 32 32">
    <circle cx="10" cy="9" r="8" fill="#12a8e6" /><circle cx="22" cy="23" r="8" fill="#12a8e6" /><circle cx="16" cy="16" r="12.500" fill="#12a8e6" />
    <path d="M21 11q-2-3-6-2.500-4 .5-4 3.500 0 2.500 5 3.500t5 4-5 4q-4.500 0-5.500-3.500" fill="none" stroke="#fff" strokeWidth="3" strokeLinecap="round" />
  </svg>
);
const WordIcon = () => (
  <svg width="32" height="32" viewBox="0 0 32 32">
    <path d="M6 2h20v24H2V8q0-5 4-6z" fill="#dce8fa" stroke="#5a7fc4" strokeWidth="1.500" />
    <path d="M3 8q1-4 4-5v21H3z" fill="#2f60b5" />
    <path d="M9 5l22 2-2 23-20-4z" fill="#f8fbff" stroke="#a9bddc" />
    <text x="11" y="18" fontFamily="Liberation Serif, serif" fontWeight="bold" fontStyle="italic" fontSize="12" fill="#2453a5">W</text>
    <path d="M23 9h5M23 12h5M23 15h5M12 20l15 1.500M12 23l14 2" stroke="#2f60b5" strokeWidth="1.800" />
  </svg>
);
const AcrobatIcon = () => (
  <svg width="30" height="29" viewBox="0 0 30 29">
    <path d="M1 3l2-2h24v25H1z" fill="#d5d5d5" /><rect x="1" y="3" width="28" height="25" fill="#c00a0e" />
    <path d="M6 22q1-3 7-4.500 6-1.500 11-.5 3 .5 3-1t-3-1-6.500-2.500Q14 9 14.500 6t1.500 0q0 4-3 11-4 7-6.500 7-1.500 0-.5-2z" fill="none" stroke="#fff" strokeWidth="1.400" />
  </svg>
);
const ExcelIcon = () => (
  <svg width="32" height="31" viewBox="0 0 32 31">
    <path d="M7 1h20v24H1V8q1-6 6-7z" fill="#edf6e6" stroke="#67a63c" strokeWidth="1.500" />
    <path d="M6 6l25 2-2 21-23-3z" fill="#fbfdf9" stroke="#b3c8a5" />
    <path d="M8 10h4l2.500 3 3.500-3h4l-5.500 5 4 5h-4l-2.500-3-3.500 3H7l5-5z" fill="#2c7a2e" />
    <path d="M23 10h6v4h-6zM23 16h6v4h-6zM6 22h5v4H6zM13 22h7v4h-7zM22 22h6v4h-6z" fill="#7fb35b" />
  </svg>
);

function TaskButton({ label, stacked, active, children }: Kids & { label: string; stacked?: boolean; active?: boolean }) {
  return (
    <div className="flex w-[58px] items-stretch">
      <button
        aria-label={label}
        className={
          "flex flex-1 items-center justify-center rounded-[3px] border border-white/45 bg-linear-to-br " +
          (active ? "from-[#eceff4]/90 via-[#a9afbd]/80 to-[#8d93a5]/80" : "from-white/45 via-white/20 to-white/15")
        }
      >
        {children}
      </button>
      {stacked && <span className="w-1 rounded-r-[3px] border border-l-0 border-white/45 bg-white/10" />}
    </div>
  );
}

function Taskbar() {
  return (
    <div className="flex h-[39px] shrink-0 items-stretch border-t border-[#5f7378] bg-[linear-gradient(90deg,#070a0f_0%,#0b0f16_28%,#323a52_33%,#474d66_40%,#505873_52%,#343c58_62%,#3c4460_68%,#263150_70%,#090d12_72%,#0e1115_100%)] text-white">
      <div className="flex w-[246px] shrink-0 items-center">
        <button aria-label="Start" className="ml-2"><StartOrb /></button>
        <button aria-label="Windows Media Player" className="ml-7"><MediaIcon /></button>
        <button aria-label="Internet Explorer" className="ml-[33px]"><IEIcon /></button>
        <button aria-label="Průzkumník Windows" className="ml-[29px]"><FolderIcon /></button>
      </div>
      <div className="flex gap-1">
        <TaskButton label="Google Chrome"><ChromeIcon /></TaskButton>
        <TaskButton label="ICQ" stacked><IcqIcon /></TaskButton>
        <TaskButton label="Rychlé poznámky"><NotesIcon /></TaskButton>
        <TaskButton label="Skype"><SkypeIcon /></TaskButton>
        <TaskButton label="Microsoft Word" stacked><WordIcon /></TaskButton>
        <TaskButton label="Adobe Reader"><AcrobatIcon /></TaskButton>
        <TaskButton label="Microsoft Excel" active><ExcelIcon /></TaskButton>
      </div>
      <div className="ml-auto flex items-center">
        <span className="mr-4 pb-1.5 text-[11px]">CS</span>
        <button aria-label="Skryté ikony" className="mr-[13px]"><svg width="8" height="5"><path d="M0 5h8L4 0z" fill="#fff" /></svg></button>
        <button aria-label="Centrum akcí" className="mr-3">
          <svg width="15" height="14" viewBox="0 0 15 14" fill="#fff"><path d="M0 0h1.500v14H0zM2 1h6v2h6l-2 3-3 2-1-2H2z" /></svg>
        </button>
        <button aria-label="Hlasitost" className="mr-2.5">
          <svg width="12" height="14" viewBox="0 0 12 14"><path d="M0 4h2l5-4v14l-5-4H0z" fill="#fff" /><path d="M9 4q2.500 3 0 6" stroke="#fff" fill="none" strokeWidth="1.300" /></svg>
        </button>
        <button aria-label="Napájení" className="mr-[18px]">
          <svg width="14" height="15" viewBox="0 0 14 15" fill="none" stroke="#fff"><path d="M6 2.500H.8v12h8V12" strokeWidth="1.600" /><path d="M7 4h6v4l-3 2-3-2zM10 10v3" fill="#fff" /><path d="M8 0v4M12 0v4" strokeWidth="1.500" /><path d="M3 5h2v7H3z" fill="#fff" /></svg>
        </button>
        <time className="w-[44px] text-center text-[11px] leading-[17px] whitespace-nowrap">
          10:09
          <br />
          8.5.2013
        </time>
        <button aria-label="Zobrazit plochu" className="ml-[11px] h-full w-[14px] border border-[#5c646b] bg-linear-to-b from-[#5e6466] to-[#14181b]" />
      </div>
    </div>
  );
}

export default function App() {
  return (
    <div className="flex h-screen flex-col overflow-hidden bg-[#bfdbff] font-[Open_Sans,Noto_Sans,sans-serif]">
      <TitleBar />
      <TabRow />
      <Ribbon />
      <FormulaBar />
      <Sheet />
      <SheetBar />
      <StatusBar />
      <Taskbar />
    </div>
  );
}
